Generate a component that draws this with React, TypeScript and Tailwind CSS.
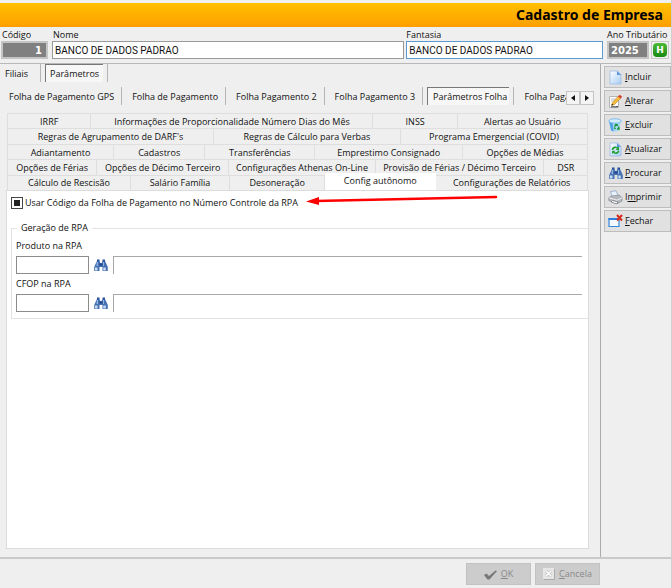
import { useState } from 'react';
import type { ReactNode } from 'react';
import clsx from 'clsx';

const mainTabs = ['Folha de Pagamento GPS', 'Folha de Pagamento', 'Folha Pagamento 2', 'Folha Pagamento 3', 'Parâmetros Folha', 'Folha Paga'];

// each row fills the whole width, the class is the share of every tab
const tabRows: [string, string][][] = [
  [['IRRF', 'flex-[83]'], ['Informações de Proporcionalidade Número Dias do Mês', 'flex-[283]'], ['INSS', 'flex-[84]'], ['Alertas ao Usuário', 'flex-[130]']],
  [["Regras de Agrupamento de DARF's", 'flex-[206]'], ['Regras de Cálculo para Verbas', 'flex-[187]'], ['Programa Emergencial (COVID)', 'flex-[187]']],
  [['Adiantamento', 'flex-[106]'], ['Cadastros', 'flex-[91]'], ['Transferências', 'flex-[110]'], ['Emprestimo Consignado', 'flex-[148]'], ['Opções de Médias', 'flex-[125]']],
  [['Opções de Férias', 'flex-[89]'], ['Opções de Décimo Terceiro', 'flex-[132]'], ['Configurações Athenas On-Line', 'flex-[147]'], ['Provisão de Férias / Décimo Terceiro', 'flex-[169]'], ['DSR', 'flex-[43]']],
  [['Cálculo de Rescisão', 'flex-[123]'], ['Salário Família', 'flex-[99]'], ['Desoneração', 'flex-[95]'], ['Config autônomo', 'flex-[111]'], ['Configurações de Relatórios', 'flex-[152]']],
];

function Binoculars() {
  return (
    <svg width="14" height="14" viewBox="0 0 14 14" aria-hidden="true">
      <path d="M3 3h2.500l.8 2h1.400l.8-2H11l1 2 1.800 4v4H8.500V9h-3v4H.2V9L2 5z" fill="#4672b4" />
      <path d="M3 1.500h2.500v2H3zM8.500 1.500H11v2H8.500z" fill="#27509a" />
      <path d="M1 9.500h2.500v3H1zM9.300 9.500h2.500v3H9.300z" fill="#c9dcf4" />
      <path d="M3 4h1v4H2.500zM9 4h1v4H9z" fill="#93b5e4" />
      <path d="M5.500 5.500h3v2h-3z" fill="#1f4384" />
    </svg>
  );
}

function PageIcon({ children }: { children?: ReactNode }) {
  return (
    <svg width="15" height="15" viewBox="0 0 15 15" aria-hidden="true">
      <defs>
        <linearGradient id="sheet" x1="0" y1="0" x2="1" y2="1">
          <stop offset="0" stopColor="#fff" />
          <stop offset="1" stopColor="#a9cdf5" />
        </linearGradient>
      </defs>
      <path d="M2 1h7.500L13 4.500V14H2z" fill="url(#sheet)" stroke="#9dbbe2" strokeWidth=".8" />
      <path d="M9 1v4h4z" fill="#5f95dc" />
      {children}
    </svg>
  );
}

const actions: { before: string; key: string; after: string; icon: ReactNode }[] = [
  { before: '', key: 'I', after: 'ncluir', icon: <PageIcon /> },
  {
    before: '', key: 'A', after: 'lterar',
    icon: (
      <svg width="15" height="15" viewBox="0 0 15 15" aria-hidden="true">
        <path d="M1.500 2.500h9v11h-9z" fill="#fff" stroke="#b5b5b5" />
        <path d="M3 5h5M3 7h4" stroke="#c0c0c0" />
        <path d="M3.500 11.500l1-3 6-6.500 2.500 2-6.500 6.500z" fill="#f8bd3c" stroke="#a8711b" strokeWidth=".5" />
        <path d="M10 2.500L11.800.800l2.400 2L12.500 4.600z" fill="#d8402f" />
        <path d="M3.500 11.500l.5-1.800 1.300 1.200z" fill="#111" />
        <path d="M3 13c2-1 3 .5 7-.5" fill="none" stroke="#333" />
      </svg>
    ),
  },
  {
    before: '', key: 'E', after: 'xcluir',
    icon: (
      <svg width="15" height="15" viewBox="0 0 15 15" aria-hidden="true">
        <path d="M1 3l2 9c1 2 7 2 8 0l2-9z" fill="#a8d6f7" />
        <path d="M1 3l2 9c.5 1 1.500 1.400 2.500 1.500L4.500 4z" fill="#4f9fe4" />
        <ellipse cx="7" cy="3" rx="6.300" ry="2.200" fill="#d3edfc" stroke="#68aee8" strokeWidth=".8" />
        <path d="M6.500 8.500l1.500-2 2 1M10.500 8.500l.5 2.500H9M7.500 11L6.200 9.500" fill="none" stroke="#159a35" strokeWidth="1.500" />
      </svg>
    ),
  },
  {
    before: '', key: 'A', after: 'tualizar',
    icon: (
      <PageIcon>
        <path d="M4.500 8c0-3 4-3.500 5.500-1.500M10.500 8.500c0 3-4 3.500-5 1.500" fill="none" stroke="#20a035" strokeWidth="1.600" />
        <path d="M11 4.500V8H7.500zM4 12V8.800h3.500z" fill="#20a035" />
      </PageIcon>
    ),
  },
  { before: '', key: 'P', after: 'rocurar', icon: <Binoculars /> },
  {
    before: 'I', key: 'm', after: 'primir',
    icon: (
      <svg width="15" height="15" viewBox="0 0 15 15" aria-hidden="true">
        <path d="M2.500 1.500L8 .800l2.500 5.700-6 1z" fill="#e8f2fd" stroke="#8da4c4" strokeWidth=".8" />
        <path d="M.8 7.500L4 6l7-1 3 2.500v3.500l-5 2.800L.8 10.500z" fill="#b5b8bf" stroke="#7c8088" strokeWidth=".6" />
        <path d="M1 7.800l8 2.400 5-2.400" fill="none" stroke="#f1f1f1" />
        <path d="M4.500 10.500l5.500 1.500-1.500 1.800L3 12z" fill="#fff" stroke="#5d6068" strokeWidth=".6" />
      </svg>
    ),
  },
  {
    before: '', key: 'F', after: 'echar',
    icon: (
      <svg width="15" height="15" viewBox="0 0 15 15" aria-hidden="true">
        <path d="M1 4.500h10v8H1z" fill="#f3f9ff" stroke="#3388e0" strokeWidth="1.200" />
        <path d="M.5 4h10.500v2H.500z" fill="#2f80dc" />
        <path d="M9 1l5 5.500m0-5.500L9 6.500" stroke="#d62a1c" strokeWidth="2" />
      </svg>
    ),
  },
];

function LookupField({ id, label }: { id: string; label: string }) {
  return (
    <div>
      <label htmlFor={id} className="block h-4 leading-4">{label}</label>
      <div className="mt-0.5 flex items-center">
        <input id={id} className="h-[18px] w-[73px] border border-[#8c8c8c] bg-white px-1 outline-none" />
        <button type="button" aria-label={`Procurar ${label}`} className="mx-[5px]"><Binoculars /></button>
        <input aria-label={`Descrição ${label}`} readOnly className="h-[18px] min-w-0 flex-1 border-t border-l border-[#a8a8a8] bg-white px-1 outline-none" />
      </div>
    </div>
  );
}

export default function App() {
  const [section, setSection] = useState('Parâmetros');
  const [mainTab, setMainTab] = useState('Parâmetros Folha');
  const [subTab, setSubTab] = useState('Config autônomo');
  const [nome, setNome] = useState('BANCO DE DADOS PADRAO');
  const [fantasia, setFantasia] = useState('BANCO DE DADOS PADRAO');

  return (
    <div className="flex min-h-screen flex-col border-r border-[#cfcfcf] bg-[#efefef] font-['Open_Sans',sans-serif] text-[9px] leading-3 text-[#111]">
      <header className="mt-[3px] flex h-6 items-center justify-end bg-linear-to-b from-[#ffc000] to-[#ff9e00] pr-2">
        <h1 className="font-['Noto_Sans',sans-serif] text-[14px] font-bold text-black">Cadastro de Empresa</h1>
      </header>

      <div className="flex h-[37px] items-end border-b border-[#b8b8b8] pr-0.5 pb-1 pl-px">
        <div className="w-[51px]">
          <label htmlFor="codigo" className="block h-3 pl-px">Código</label>
          <input id="codigo" readOnly value="1" className="h-[18px] w-[47px] border-2 border-[#c4c4c4] bg-[#808080] px-1 text-right font-['DejaVu_Sans',sans-serif] text-[10px] font-bold text-white outline-none" />
        </div>
        <div className="flex-[353]">
          <label htmlFor="nome" className="block h-3 pl-px">Nome</label>
          <input id="nome" value={nome} onChange={e => setNome(e.target.value)} className="h-[18px] w-full border border-[#9a9a9a] bg-white px-0.5 font-['Roboto',sans-serif] text-[10px] outline-none" />
        </div>
        <div className="ml-0.5 flex-[197]">
          <label htmlFor="fantasia" className="block h-3">Fantasia</label>
          <input id="fantasia" value={fantasia} onChange={e => setFantasia(e.target.value)} className="h-[18px] w-full border border-[#5b9bd5] bg-white px-0.5 font-['Roboto',sans-serif] text-[10px] outline-none" />
        </div>
        <div className="ml-1 w-[62px]">
          <label htmlFor="ano" className="block h-3 whitespace-nowrap">Ano Tributário</label>
          <div className="flex gap-0.5">
            <input id="ano" readOnly value="2025" className="h-[18px] w-[42px] border-2 border-[#c4c4c4] bg-[#808080] px-0.5 font-['DejaVu_Sans',sans-serif] text-[10px] font-bold text-white outline-none" />
            <button type="button" aria-label="Histórico" className="flex size-[18px] items-center justify-center border border-[#c8c8c8]">
              <span className="flex size-3.5 items-center justify-center rounded-sm bg-linear-to-b from-[#4cba35] to-[#148a10] font-['DejaVu_Sans',sans-serif] text-[9px] font-bold text-white">H</span>
            </button>
          </div>
        </div>
      </div>

      <div className="flex flex-1">
        <main className="flex min-w-0 flex-1 flex-col border-r border-[#ababab] pb-2">
          <nav className="flex h-[18px] items-stretch pl-1">
            {['Filiais', 'Parâmetros'].map(t => (
              <div key={t} className="mr-1 flex border-r border-[#b5b5b5] pr-1">
                <button type="button" onClick={() => setSection(t)}
                  className={clsx('border-t border-l', section === t ? 'border-[#777] bg-[#f7f7f7] px-1' : 'border-transparent pr-2')}>{t}</button>
              </div>
            ))}
          </nav>

          <nav className="mt-[5px] flex items-stretch pr-1.5 pl-[3px]">
            <div className="flex h-[18px] min-w-0 flex-1 overflow-hidden">
              {mainTabs.map(t => (
                <div key={t} className="mr-1 flex shrink-0 border-r border-[#b5b5b5] pr-1 last:mr-0 last:border-r-0 last:pr-0">
                  <button type="button" onClick={() => setMainTab(t)}
                    className={clsx('border-t border-l pl-[5px] whitespace-nowrap',
                      mainTab === t ? 'border-[#777] bg-[#f7f7f7] pr-0.5' : 'border-transparent pr-[3px]')}>{t}</button>
                </div>
              ))}
            </div>
            <div className="mt-1 flex h-3.5">
              <button type="button" aria-label="Anterior" className="flex w-3.5 items-center justify-center border border-[#c4c4c4] bg-[#f4f4f4]">
                <svg width="4" height="6" viewBox="0 0 4 6"><path d="M4 0v6L0 3z" fill="#111" /></svg>
              </button>
              <button type="button" aria-label="Próximo" className="flex w-3.5 items-center justify-center border border-[#c4c4c4] bg-[#f4f4f4]">
                <svg width="4" height="6" viewBox="0 0 4 6"><path d="M0 0v6l4-3z" fill="#111" /></svg>
              </button>
            </div>
          </nav>

          <div className="mt-2 mr-3 ml-[7px] flex h-[77px] flex-col border-l border-[#dedede]">
            {tabRows.map((row, i) => (
              <div key={i} className="flex flex-1">
                {row.map(([label, share]) => (
                  <button key={label} type="button" onClick={() => setSubTab(label)}
                    className={clsx('min-w-0 border-t border-r whitespace-nowrap', share,
                      subTab === label ? '-mt-0.5 border-white bg-white pb-px' : 'border-[#dedede] pt-px')}>{label}</button>
                ))}
              </div>
            ))}
          </div>

          <section className="relative mr-[11px] ml-1.5 flex-1 border border-[#dcdcdc] bg-white pt-1.5 pl-1">
            <label className="flex items-center gap-0.5">
              <input type="checkbox" ref={el => { if (el) el.indeterminate = true; }}
                className="size-3 appearance-none border border-[#444] bg-white shadow-[inset_0_0_0_2px_#fff] indeterminate:bg-[#222] checked:bg-[#222]" />
              Usar Código da Folha de Pagamento no Número Controle da RPA
            </label>
            <svg className="absolute top-1 left-[299px]" width="192" height="12" viewBox="0 0 192 12" aria-hidden="true">
              <path d="M190 2L10 6" stroke="#f00" strokeWidth="2.500" strokeLinecap="round" />
              <path d="M0 6.500L13 2v8z" fill="#f00" />
            </svg>

            <fieldset className="mt-[13px] min-w-0 border border-r-0 border-[#e2e2e2] pr-1.5 pb-1.5 pl-1">
              <legend className="ml-px px-1">Geração de RPA</legend>
              <div className="flex flex-col gap-0.5 pt-1">
                <LookupField id="produto" label="Produto na RPA" />
                <LookupField id="cfop" label="CFOP na RPA" />
              </div>
            </fieldset>
          </section>
        </main>

        <aside className="flex w-[70px] flex-col gap-0.5 py-0.5 pl-[3px]">
          {actions.map(a => (
            <button key={a.before + a.key + a.after} type="button"
              className="flex h-[22px] items-center gap-0.5 border border-[#bdbdbd] bg-[#e1e1e1] pl-[3px]">
              <span className="flex w-[15px] justify-center">{a.icon}</span>
              <span>{a.before}<u>{a.key}</u>{a.after}</span>
            </button>
          ))}
        </aside>
      </div>

      <footer className="flex h-[31px] items-start justify-end gap-1 border-t-2 border-[#cacaca] pt-1 pr-[71px]">
        <button type="button" disabled className="flex h-[22px] w-[65px] items-center justify-center gap-1 border border-[#c2c2c2] bg-[#cccccc] text-[#8a8a8a]">
          <svg width="13" height="11" viewBox="0 0 13 11" aria-hidden="true"><path d="M0 6l2.500-1.500L5 7l6.500-5.500L13 2 5.500 10.500h-2z" fill="#777" /></svg>
          <span><u>O</u>K</span>
        </button>
        <button type="button" disabled className="flex h-[22px] w-[65px] items-center justify-center gap-1 border border-[#c2c2c2] bg-[#cccccc] text-[#8a8a8a]">
          <svg width="12" height="12" viewBox="0 0 12 12" aria-hidden="true">
            <path d="M0 0h11v11H0z" fill="#e6e6e6" />
            <path d="M1 11.500h10.500V1" fill="none" stroke="#aaa" />
            <path d="M3 3l5 5m0-5L3 8" stroke="#b5b5b5" strokeWidth="2.600" />
            <path d="M3 3l5 5m0-5L3 8" stroke="#fff" strokeWidth="1.600" />
          </svg>
          <span><u>C</u>ancela</span>
        </button>
      </footer>
    </div>
  );
}
